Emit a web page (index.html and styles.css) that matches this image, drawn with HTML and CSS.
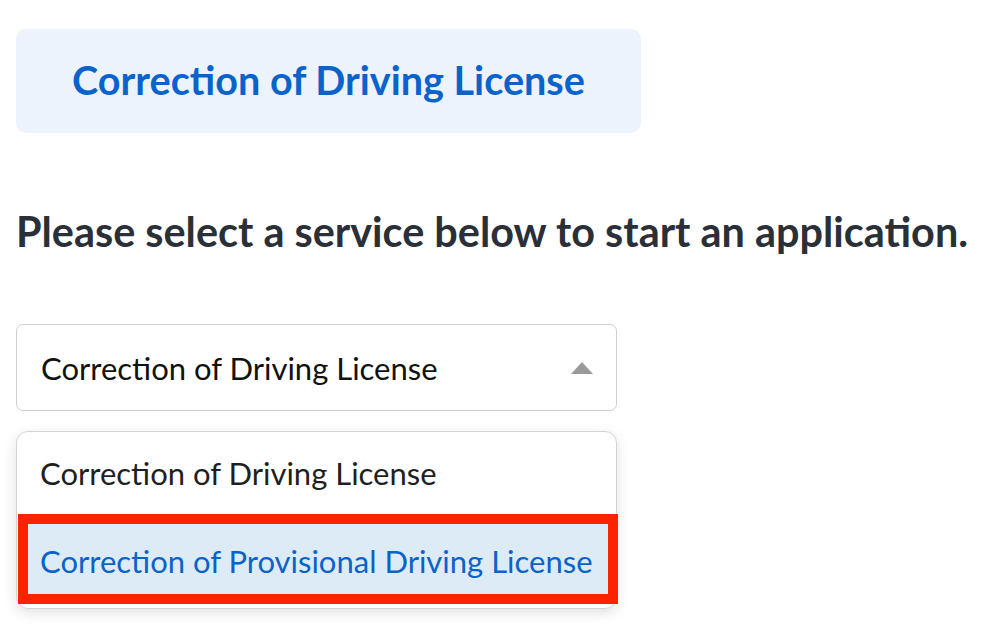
FILE: index.html
```html
<!DOCTYPE html>
<html lang="en">
<head>
<meta charset="utf-8">
<title>Service selection</title>
<link rel="stylesheet" href="styles.css">
</head>
<body>
<main class="page">
  <div class="title-card">
    <h1 class="title">Correction of Driving License</h1>
  </div>
  <h2 class="prompt">Please select a service below to start an application.</h2>
  <div class="select">
    <span class="select-value">Correction of Driving License</span>
    <span class="caret"></span>
  </div>
  <ul class="menu">
    <li class="option">Correction of Driving License</li>
    <li class="option option-active">Correction of Provisional Driving License</li>
  </ul>
</main>
</body>
</html>
```

FILE: styles.css
```css
* { box-sizing: border-box; }
html, body { margin: 0; padding: 0; background: #fff; }
body {
  font-family: "Lato", "Noto Sans", sans-serif;
  width: 994px;
  height: 628px;
  overflow: hidden;
}
.page {
  padding: 29px 16px 0 16px;
  display: flex;
  flex-direction: column;
  align-items: flex-start;
}
.title-card {
  width: 625px;
  height: 104px;
  background: #ecf3fc;
  border-radius: 10px;
  display: flex;
  align-items: center;
  justify-content: center;
}
.title {
  margin: 0;
  padding-bottom: 4px;
  font-size: 39.6px;
  font-weight: 700;
  color: #0a63cc;
}
.prompt {
  margin: 78px 0 0 0;
  height: 40px;
  line-height: 40px;
  font-size: 41.4px;
  font-weight: 700;
  color: #2b3038;
  white-space: nowrap;
}
.select {
  margin-top: 73px;
  width: 601px;
  height: 87px;
  border: 1.5px solid #cfcfcf;
  border-radius: 7px;
  display: flex;
  align-items: center;
  justify-content: space-between;
  padding: 0 23px 0 24px;
}
.select-value {
  font-size: 31px;
  color: #111;
}
.caret {
  width: 0;
  height: 0;
  border-left: 11px solid transparent;
  border-right: 11px solid transparent;
  border-bottom: 12px solid #9a9a9a;
}
.menu {
  list-style: none;
  margin: 20px 0 0 0;
  padding: 0;
  width: 601px;
  height: 178px;
  border: 1.5px solid #d3d3d3;
  border-radius: 12px;
  box-shadow: 0 4px 14px rgba(0, 0, 0, 0.12);
  background: #fff;
  display: flex;
  flex-direction: column;
}
.option {
  height: 82px;
  display: flex;
  align-items: center;
  padding-left: 23px;
  font-size: 31px;
  color: #1f1f1f;
}
.option-active {
  height: 90px;
  margin-left: 1px;
  margin-right: -2px;
  padding-left: 12px;
  padding-top: 4px;
  background: #ddebf7;
  border: 10px solid #ff2200;
  color: #0b62c8;
}
```
